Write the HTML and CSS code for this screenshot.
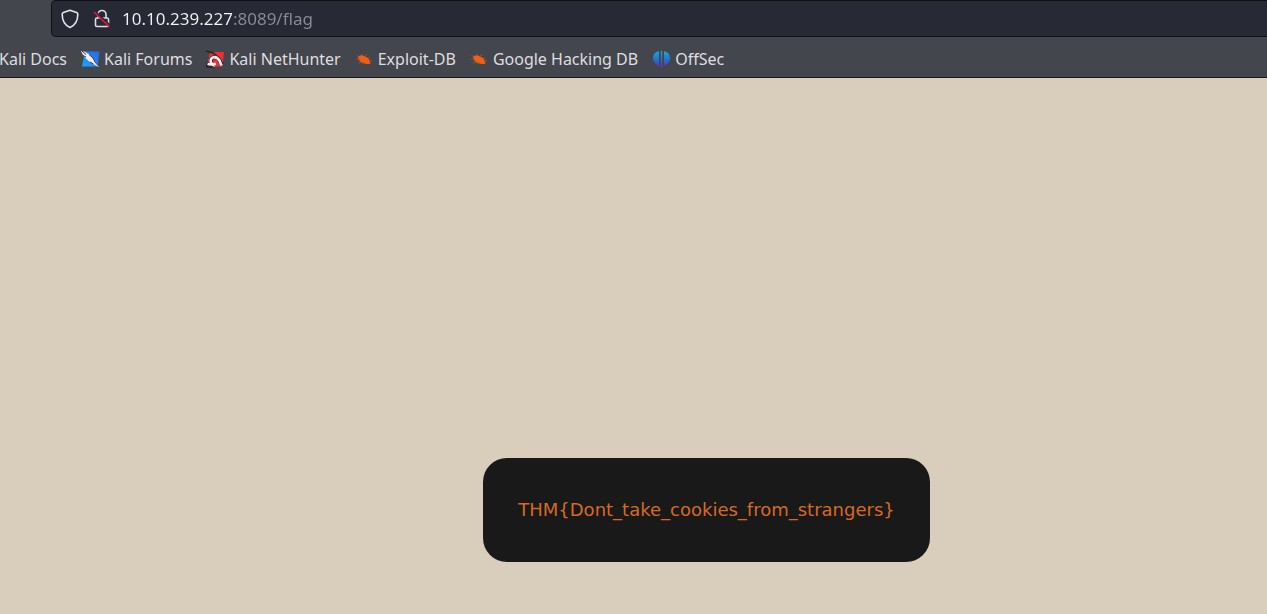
FILE: index.html
```html
<!DOCTYPE html>
<html lang="en">
<head>
<meta charset="utf-8">
<title>Flag</title>
<link rel="stylesheet" href="styles.css">
</head>
<body>
<header class="browser">
  <div class="toolbar">
    <div class="urlbar">
      <button class="icon-button" type="button" aria-label="Tracking protection">
        <svg width="18" height="20" viewBox="0 0 18 20" fill="none" stroke="#e4e4e8" stroke-width="1.6" stroke-linejoin="round"><path d="M9 1.200 L15.600 3.500 Q16.800 4 16.800 5.200 C16.800 11.500 14.500 16 9 18.500 C3.500 16 1.200 11.500 1.200 5.200 Q1.200 4 2.400 3.500 Z"/></svg>
      </button>
      <button class="icon-button" type="button" aria-label="Connection not secure">
        <svg width="18" height="20" viewBox="0 0 18 20" fill="none"><path d="M5 9 V5.500 A4 4 0 0 1 13 5.500 V9 M4 9 H14 Q15.500 9 15.500 10.500 V16 Q15.500 17.500 14 17.500 H4 Q2.500 17.500 2.500 16 V10.500 Q2.500 9 4 9 Z" stroke="#dedee2" stroke-width="1.600"/><path d="M2 3 L16.500 16.500" stroke="#272935" stroke-width="3"/><path d="M1 3 L16.500 17.800" stroke="#e2143f" stroke-width="1.700"/></svg>
      </button>
      <input class="address" type="text" aria-label="Address" value="10.10.239.227:8089/flag">
    </div>
  </div>
  <nav class="bookmarks" aria-label="Bookmarks">
    <a class="bookmark" href="#docs">Kali Docs</a>
    <a class="bookmark" href="#forums">
      <svg width="19" height="18" viewBox="0 0 19 18"><defs><linearGradient id="blue" x1="0" y1="1" x2="1" y2="0"><stop stop-color="#18a8ff"/><stop offset="1" stop-color="#2864f4"/></linearGradient></defs><path d="M4 1.500 H18.500 L16.500 16.500 H1 Z" fill="url(#blue)"/><path d="M0 1 L3.500 1.500 L9 5 L12.500 9 L18 17 L12 14 L7.500 11 L2.500 6 Z" fill="#f0eee8"/><path d="M1 1 L5 4.500 M2 5.500 L5 7 M8 4.500 L12 8 L14 12 L17 15.500 M9 12 L12.500 14" stroke="#343841" stroke-width="1" fill="none"/></svg>
      Kali Forums</a>
    <a class="bookmark" href="#nethunter">
      <svg width="19" height="18" viewBox="0 0 19 18"><path d="M4 2 H18 L16.500 16.500 H1 Z" fill="#f42c38"/><path d="M0 1 L7 3 L11 6" fill="none" stroke="#24242a" stroke-width="1.500"/><path d="M2 14.500 L5 14 L6.500 16 Q4 17 1.500 16 Z M6 13.500 C2 7 10 4.500 14 11 L16 15" fill="none" stroke="#33282e" stroke-width="4"/><path d="M2 15 Q3 13.500 6 14.500 C1.500 8 9 4 13.500 10.500 L15.500 15.500 M6 14 H10" fill="none" stroke="#f7f1ee" stroke-width="2.600"/></svg>
      Kali NetHunter</a>
    <a class="bookmark" href="#exploit">
      <svg width="19" height="18" viewBox="0 0 19 18"><path d="M3 7 Q5 4 9 6 L13 8 Q15 10 15.500 13.500 Q11 15 6 12 Q3 10 3 7 Z" fill="#f2600f"/><path d="M4 7 L1.500 5 M5 9 L1 9 M7 12 L3 13 M8 6 L7 4 M10 7 L12 4 M13 9 L15 7 M14 11 L17 10.500 M9 12 L7 14" stroke="#a95732" stroke-width=".8" fill="none"/></svg>
      Exploit-DB</a>
    <a class="bookmark" href="#hacking">
      <svg width="19" height="18" viewBox="0 0 19 18"><path d="M3 7 Q5 4 9 6 L13 8 Q15 10 15.500 13.500 Q11 15 6 12 Q3 10 3 7 Z" fill="#f2600f"/><path d="M4 7 L1.500 5 M5 9 L1 9 M7 12 L3 13 M8 6 L7 4 M10 7 L12 4 M13 9 L15 7 M14 11 L17 10.500 M9 12 L7 14" stroke="#a95732" stroke-width=".8" fill="none"/></svg>
      Google Hacking DB</a>
    <a class="bookmark" href="#offsec">
      <svg width="19" height="18" viewBox="0 0 19 18"><defs><linearGradient id="off" x1="0" y1="0" x2="0" y2="1"><stop stop-color="#13add5"/><stop offset=".55" stop-color="#286bcf"/><stop offset="1" stop-color="#6825ba"/></linearGradient></defs><path d="M7 1.200 V16 C4 14 1 12 1 8 C1 4 4 1.500 7 1.200 Z M12 1.200 C15 1.500 18 4 18 8 C18 12 15 14 12 16 Z M8.800 1 H10.200 V18 H8.800 Z" fill="url(#off)"/></svg>
      OffSec</a>
  </nav>
</header>
<main class="page">
  <section class="card"><p class="flag">THM{Dont_take_cookies_from_strangers}</p></section>
</main>
</body>
</html>
```
FILE: styles.css
```css
* { box-sizing: border-box; }
body {
  margin: 0;
  min-height: 100vh;
  display: flex;
  flex-direction: column;
  background: #d9cdbc;
  font-family: "Noto Sans", sans-serif;
}
.browser {
  background: #44464e;
  border-bottom: 1px solid #17171d;
  overflow: hidden;
}
.toolbar { padding-left: 51px; }
.urlbar {
  display: flex;
  align-items: center;
  height: 37px;
  padding-left: 9px;
  background: #272935;
  border: 1px solid #101116;
  border-right: 0;
  border-radius: 5px 0 0 5px;
}
.icon-button {
  display: flex;
  padding: 0;
  margin-right: 14px;
  border: 0;
  background: none;
}
.icon-button + .address { margin-left: -3px; }
.address {
  flex: 1;
  min-width: 0;
  height: 30px;
  padding: 0;
  border: 0;
  outline: 0;
  font: 17px "Noto Sans", sans-serif;
  color: transparent;
  background: linear-gradient(90deg, #f4f4f6 110px, #8b8c93 110px);
  background-clip: text;
}
.bookmarks {
  display: flex;
  align-items: center;
  gap: 14px;
  height: 40px;
  margin-left: -1px;
  padding-top: 4px;
}
.bookmark {
  display: flex;
  align-items: center;
  gap: 4px;
  color: #dededf;
  font-size: 16px;
  line-height: 24px;
  text-decoration: none;
  white-space: nowrap;
}
.page {
  flex: 1;
  display: flex;
  align-items: flex-end;
  justify-content: center;
  padding: 0 0 52px 146px;
}
.card {
  padding: 40px 35px;
  border-radius: 24px;
  background: #191919;
}
.flag {
  margin: 0;
  color: #d76a22;
  font: 18px/24px "DejaVu Sans", sans-serif;
}
```
